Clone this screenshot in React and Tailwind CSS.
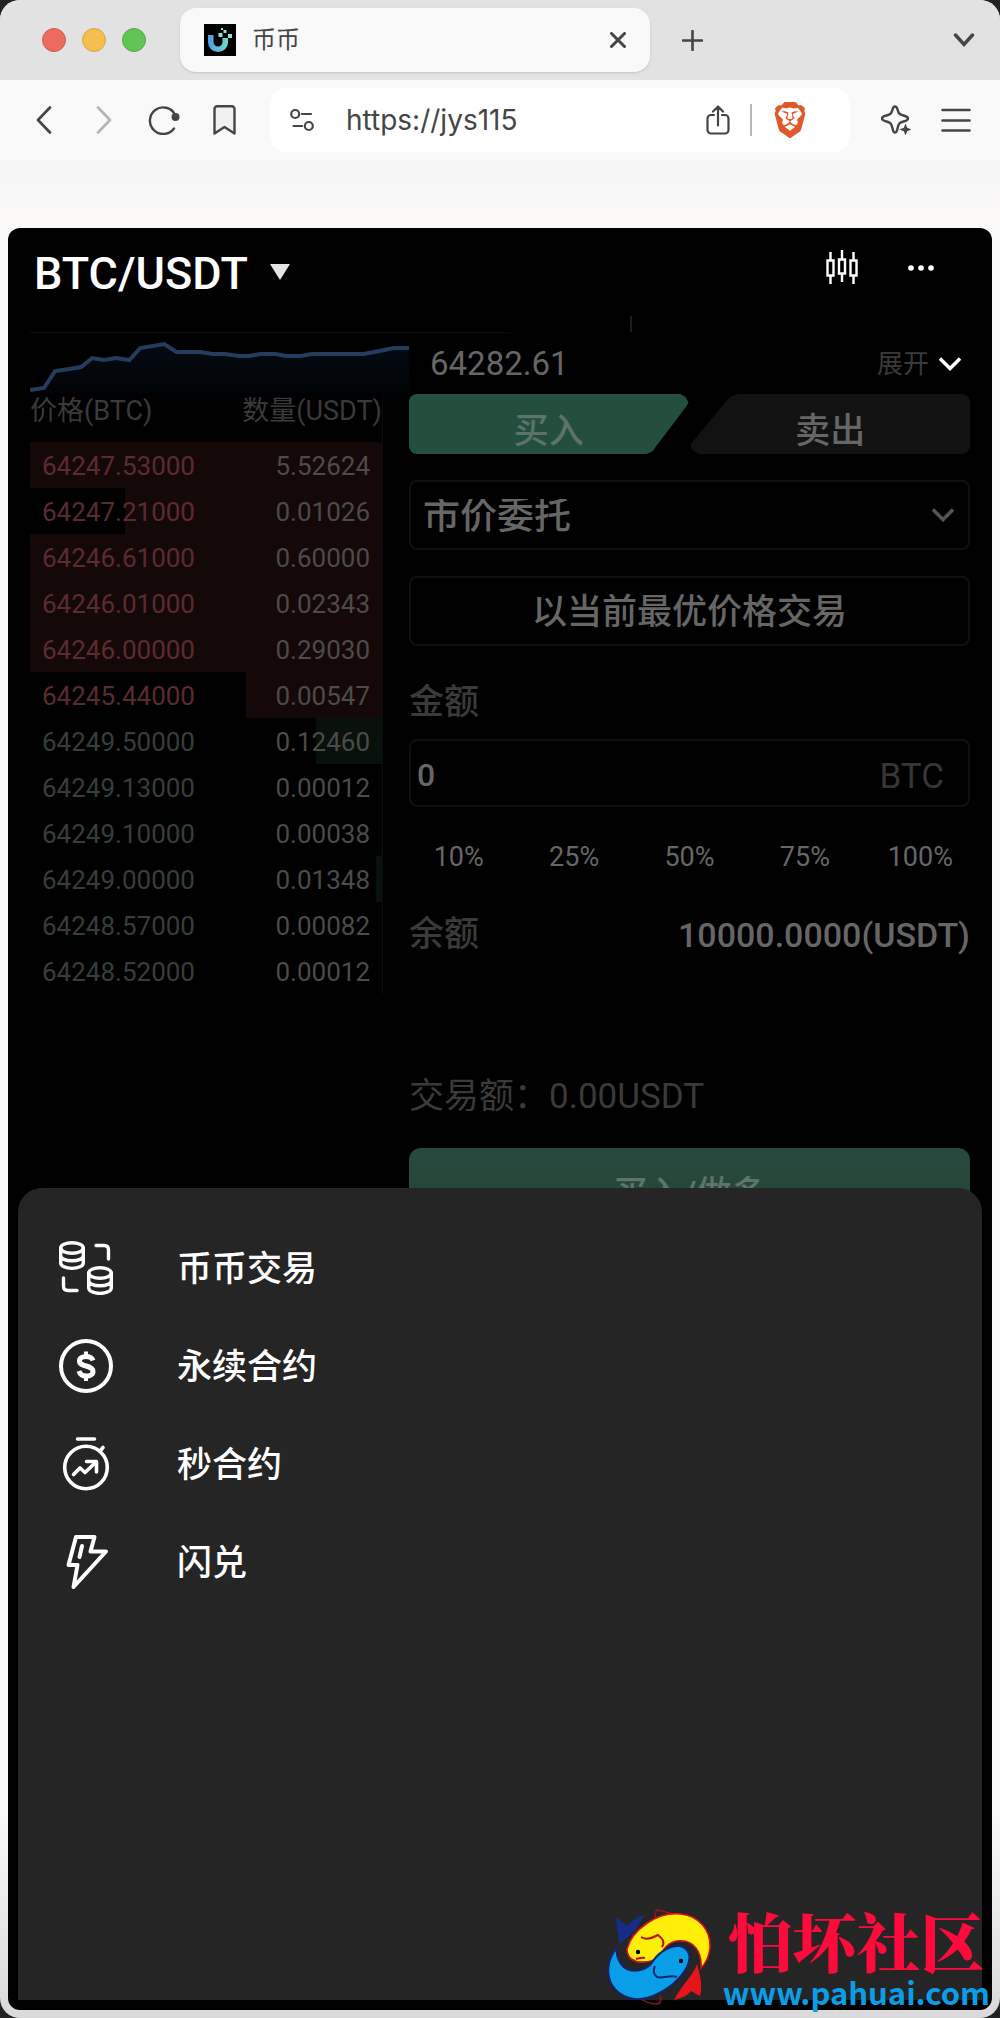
import React, { useState } from 'react'
import { SiBrave } from 'react-icons/si'

const asks = [
  { price: '64247.53000', amount: '5.52624', depth: 100 },
  { price: '64247.21000', amount: '0.01026', depth: 73 },
  { price: '64246.61000', amount: '0.60000', depth: 100 },
  { price: '64246.01000', amount: '0.02343', depth: 100 },
  { price: '64246.00000', amount: '0.29030', depth: 100 },
  { price: '64245.44000', amount: '0.00547', depth: 39 },
]

const bids = [
  { price: '64249.50000', amount: '0.12460', depth: 19 },
  { price: '64249.13000', amount: '0.00012', depth: 0 },
  { price: '64249.10000', amount: '0.00038', depth: 0 },
  { price: '64249.00000', amount: '0.01348', depth: 2 },
  { price: '64248.57000', amount: '0.00082', depth: 0 },
  { price: '64248.52000', amount: '0.00012', depth: 0 },
]

const percents = ['10%', '25%', '50%', '75%', '100%']

const menu = [
  { label: '币币交易', icon: CoinsIcon },
  { label: '永续合约', icon: DollarIcon },
  { label: '秒合约', icon: TimerIcon },
  { label: '闪兑', icon: FlashIcon },
]

function CoinsIcon() {
  return (
    <svg viewBox="0 0 54 54" className="size-[54px]" fill="none" stroke="currentColor" strokeWidth="3.400" strokeLinecap="round" aria-hidden="true">
      <ellipse cx="13" cy="7" rx="11.300" ry="5.300" />
      <path d="M1.700 7v15c0 3 5 5.400 11.300 5.400S24.300 25 24.300 22V7M1.700 14.500c0 3.200 5 5.300 11.300 5.300s11.300-2.100 11.300-5.300" />
      <ellipse cx="41" cy="32" rx="11.300" ry="5.300" />
      <path d="M29.700 32v15c0 3 5 5.400 11.300 5.400S52.300 50 52.300 47V32M29.700 39.500c0 3.200 5 5.300 11.300 5.300s11.300-2.100 11.300-5.300" />
      <path d="M37 4.500h8q4.500 0 4.500 4.500v9M4.500 37v8q0 4.500 4.500 4.500h9" />
    </svg>
  )
}

function DollarIcon() {
  return (
    <svg viewBox="0 0 54 54" className="size-[54px]" fill="none" stroke="currentColor" strokeWidth="4" aria-hidden="true">
      <circle cx="27" cy="27" r="25" />
      <path d="M34 21.500c-1-3-3.500-4-7-4s-6.500 1.500-6.500 4.500c0 6.500 13.500 3.500 13.500 10.500 0 3-3 4.500-6.500 4.500s-6.500-1.500-7.500-5" strokeWidth="5" />
      <path d="M27 12.500V18M27 36.500V42" />
    </svg>
  )
}

function TimerIcon() {
  return (
    <svg viewBox="0 0 54 54" className="size-[54px]" fill="none" stroke="currentColor" strokeWidth="3.600" strokeLinecap="round" strokeLinejoin="round" aria-hidden="true">
      <circle cx="27" cy="30.500" r="21.300" />
      <path d="M18.500 2h17M41 14l3-3.500M14.500 37.500l6.500-6.500 5 4.500 10.500-10M27.500 24.500h10V35" />
    </svg>
  )
}

function FlashIcon() {
  return (
    <svg viewBox="0 0 54 54" className="size-[54px]" fill="none" stroke="currentColor" strokeWidth="4" strokeLinecap="round" strokeLinejoin="round" aria-hidden="true">
      <path d="M17 2h18.500l-4 14.500h15.500L14.500 52l4-22H9.500z" />
      <path d="M23 11l-2.500 11" />
    </svg>
  )
}

function Chevron({ className }) {
  return (
    <svg viewBox="0 0 22 14" className={className} fill="none" stroke="currentColor" strokeWidth="3.400" aria-hidden="true">
      <path d="M1 1.500l10 10 10-10" />
    </svg>
  )
}

function BrowserBar() {
  return (
    <div className="font-['Inter','Noto_Sans_CJK_SC',sans-serif] text-[#454545]">
      <div className="flex h-20 items-center bg-[#e2e2e2] pl-[42px] pr-[25px]">
        <div className="flex gap-4">
          <span className="size-6 rounded-full border border-[#cf5a52] bg-[#ec6a5f]" />
          <span className="size-6 rounded-full border border-[#d5a545] bg-[#f4bf50]" />
          <span className="size-6 rounded-full border border-[#54a945] bg-[#61c554]" />
        </div>
        <div className="ml-[34px] flex h-16 w-[470px] items-center rounded-2xl bg-[#f9f9f9] px-6 shadow-sm shadow-black/10">
          <svg viewBox="0 0 32 32" className="size-8" aria-hidden="true">
            <defs>
              <linearGradient id="logo" x1="0" x2="1">
                <stop offset="0" stopColor="#4d9be8" />
                <stop offset="1" stopColor="#6fdcc8" />
              </linearGradient>
            </defs>
            <path d="M0 0h32v32H0z" />
            <path d="M4 11h5.500v7a4.500 4.500 0 0 0 9 0v-4H24v4.500a10 9.500 0 0 1-20 0z" fill="url(#logo)" />
            <path d="M14.500 9h4v4h-4zM19.500 6h3v3h-3zM24 10h4v4h-4zM17 4h2v2h-2z" fill="#8fe3d4" />
          </svg>
          <span className="ml-4 flex-1 text-2xl leading-8">币币</span>
          <button type="button" aria-label="关闭标签页">
            <svg viewBox="0 0 16 16" className="size-4" stroke="currentColor" strokeWidth="3" strokeLinecap="round" aria-hidden="true">
              <path d="M1.500 1.500l13 13M14.500 1.500l-13 13" />
            </svg>
          </button>
        </div>
        <button type="button" aria-label="新标签页" className="ml-8">
          <svg viewBox="0 0 21 21" className="size-[21px]" stroke="currentColor" strokeWidth="2.600" strokeLinecap="round" aria-hidden="true">
            <path d="M10.500 1v19M1 10.500h19" />
          </svg>
        </button>
        <button type="button" aria-label="标签页列表" className="ml-auto">
          <svg viewBox="0 0 22 14" className="h-[14px] w-[22px]" fill="none" stroke="currentColor" strokeWidth="3.400" strokeLinecap="round" aria-hidden="true">
            <path d="M2.500 2l8.500 9.500L19.500 2" />
          </svg>
        </button>
      </div>

      <div className="flex h-20 items-center pl-9 pr-[29px]">
        <button type="button" aria-label="后退">
          <svg viewBox="0 0 16 28" className="h-7 w-4" fill="none" stroke="currentColor" strokeWidth="2.600" strokeLinecap="round" strokeLinejoin="round" aria-hidden="true">
            <path d="M14 1.500L2 14l12 12.500" />
          </svg>
        </button>
        <button type="button" aria-label="前进" className="ml-11 text-[#b4b4b4]">
          <svg viewBox="0 0 16 28" className="h-7 w-4" fill="none" stroke="currentColor" strokeWidth="2.600" strokeLinecap="round" strokeLinejoin="round" aria-hidden="true">
            <path d="M2 1.500L14 14 2 26.500" />
          </svg>
        </button>
        <button type="button" aria-label="刷新" className="ml-9">
          <svg viewBox="0 0 32 30" className="h-[30px] w-8" fill="none" stroke="currentColor" strokeWidth="2.400" strokeLinecap="round" aria-hidden="true">
            <path d="M27 9.500A13.300 13.300 0 1 0 26 23.500" />
            <circle cx="27.500" cy="12" r="4" fill="currentColor" stroke="none" />
          </svg>
        </button>
        <button type="button" aria-label="收藏" className="ml-[33px]">
          <svg viewBox="0 0 23 30" className="h-[30px] w-[23px]" fill="#f0f0f0" stroke="currentColor" strokeWidth="2.400" strokeLinejoin="round" aria-hidden="true">
            <path d="M4 1.300h15a2.500 2.500 0 0 1 2.500 2.500V28.500L11.500 22 1.500 28.500V3.800A2.500 2.500 0 0 1 4 1.300z" />
          </svg>
        </button>
        <div className="ml-[34px] flex h-16 flex-1 items-center rounded-2xl bg-white pl-5 pr-[42px]">
          <svg viewBox="0 0 24 24" className="size-6" fill="none" stroke="currentColor" strokeWidth="2.200" strokeLinecap="round" aria-hidden="true">
            <circle cx="5.200" cy="6" r="4" />
            <circle cx="18.800" cy="18" r="4" />
            <path d="M12 6h9M3.500 18h8.500" />
          </svg>
          <input
            aria-label="网址"
            defaultValue="https://jys115"
            className="ml-8 w-0 flex-1 bg-transparent text-[28px] outline-none"
          />
          <button type="button" aria-label="分享">
            <svg viewBox="0 0 24 30" className="h-[30px] w-6" fill="none" stroke="currentColor" strokeWidth="2.200" strokeLinecap="round" strokeLinejoin="round" aria-hidden="true">
              <path d="M8 10H5a3.500 3.500 0 0 0-3.500 3.500V25A3.500 3.500 0 0 0 5 28.500h14a3.500 3.500 0 0 0 3.500-3.500V13.500A3.500 3.500 0 0 0 19 10h-3M12 20.500V1.500M7 6.500l5-5 5 5" />
            </svg>
          </button>
          <span className="ml-5 h-8 w-[2px] bg-[#b8b8b8]" />
          <SiBrave className="ml-5 size-9 text-[#e0592c]" />
        </div>
        <button type="button" aria-label="助手" className="ml-[31px]">
          <svg viewBox="0 0 30 30" className="size-[30px]" fill="none" stroke="currentColor" strokeWidth="2.400" strokeLinejoin="round" aria-hidden="true">
            <path d="M14 1.500c1.500 0 2 1 2.500 3 1 4 2 5 6 6 3 .700 4.500 1.200 4.500 3s-1.500 2.300-4.500 3c-4 1-5 2-6 7-.500 2.500-1 4-2.500 4s-2-1.500-2.500-4c-1-5-2-6-6-7-3-.700-4.500-1.200-4.500-3s1.500-2.300 4.500-3c4-1 5-2 6-6 .500-2 1-3 2.500-3z" />
            <path d="M24.500 18.500l1.700 4.300 4.300 1.700-4.300 1.700-1.700 4.300-1.700-4.300-4.300-1.700 4.300-1.700z" fill="currentColor" stroke="none" />
          </svg>
        </button>
        <button type="button" aria-label="菜单" className="ml-[30px]">
          <svg viewBox="0 0 30 24" className="h-6 w-[30px]" stroke="currentColor" strokeWidth="2.600" strokeLinecap="round" aria-hidden="true">
            <path d="M1.500 2h27M1.500 12.500h27M1.500 22.500h27" />
          </svg>
        </button>
      </div>
      <div className="h-[68px] bg-gradient-to-b from-[#f7f6f6] to-[#fbfaf9]" />
    </div>
  )
}

function OrderRow({ row, side }) {
  const ask = side === 'ask'
  const color = ask ? '#150809' : '#08110c'
  return (
    <tr
      className="h-[46px]"
      style={{ backgroundImage: `linear-gradient(to left, ${color} ${row.depth}%, transparent ${row.depth}%)` }}
    >
      <td className={ask ? 'pl-3 pt-[2px] text-[#5b2b2f]' : 'pl-3 pt-[2px] text-[#363e3c]'}>{row.price}</td>
      <td className="pr-3 pt-[2px] text-right text-[#4d4a4a]">{row.amount}</td>
    </tr>
  )
}

function PriceChart() {
  return (
    <svg viewBox="0 0 378 61" preserveAspectRatio="none" className="h-[61px] w-full" aria-hidden="true">
      <defs>
        <linearGradient id="area" x1="0" x2="0" y1="0" y2="1">
          <stop offset="0" stopColor="#040b14" />
          <stop offset="1" stopColor="#010304" />
        </linearGradient>
      </defs>
      <path d="M0 57l14-2 11-17 14-2 12-2 11-9 12 2 12-2 13 2 11-12 24-4 12 8h24l12 2h13l13 2h10l12-2h15l10 2h15l11-2h52l15-3 15-3h15v45H0z" fill="url(#area)" />
      <path d="M0 57l14-2 11-17 14-2 12-2 11-9 12 2 12-2 13 2 11-12 24-4 12 8h24l12 2h13l13 2h10l12-2h15l10 2h15l11-2h52l15-3 15-3h15" fill="none" stroke="#243d5c" strokeWidth="4" />
    </svg>
  )
}

function OrderForm() {
  const [type, setType] = useState('market')
  const [amount, setAmount] = useState('0')

  return (
    <form className="flex flex-col text-[35px] leading-9" onSubmit={(e) => e.preventDefault()}>
      <div className="grid h-[60px] grid-cols-2 gap-[2px] font-medium">
        <button type="button" className="rounded-lg bg-[#244f3f] pt-4 text-[#5d7269] [clip-path:polygon(0_0,97%_0,99%_5%,100%_14%,99%_22%,87%_96%,85%_100%,0_100%)]">
          买入
        </button>
        <button type="button" className="rounded-lg bg-[#121212] pt-4 text-[#666] [clip-path:polygon(17%_0,100%_0,100%_100%,3%_100%,0_92%,0_84%,14%_5%)]">
          卖出
        </button>
      </div>

      <div className="relative mt-[26px]">
        <select
          aria-label="委托类型"
          value={type}
          onChange={(e) => setType(e.target.value)}
          className="h-[70px] w-full appearance-none rounded-lg border-2 border-[#101010] bg-black pl-3 pt-1 text-[37px] font-medium text-[#666] outline-none"
        >
          <option value="market">市价委托</option>
          <option value="limit">限价委托</option>
        </select>
        <Chevron className="pointer-events-none absolute right-4 top-7 h-[14px] w-[22px] text-[#555]" />
      </div>

      <div className="mt-[26px] flex h-[70px] items-center justify-center rounded-lg border-2 border-[#101010] pt-1 font-medium text-[#666]">
        以当前最优价格交易
      </div>

      <label htmlFor="amount" className="mt-[39px] font-medium text-[#3a3a3a]">金额</label>
      <div className="mt-[18px] flex h-[68px] items-center rounded-lg border-2 border-[#101010] pl-[6px] pr-6">
        <input
          id="amount"
          value={amount}
          onChange={(e) => setAmount(e.target.value)}
          className="w-0 flex-1 bg-transparent pt-1 text-[32px] font-medium text-[#666] outline-none"
        />
        <span className="pt-2 text-[35px] text-[#363636]">BTC</span>
      </div>

      <div className="-mx-2 mt-8 grid grid-cols-5 text-[27px] text-[#666]">
        {percents.map((p) => (
          <button key={p} type="button">{p}</button>
        ))}
      </div>

      <div className="mt-[42px] flex justify-between font-medium">
        <span className="text-[#3a3a3a]">余额</span>
        <span className="text-[34px] text-[#666]">10000.0000(USDT)</span>
      </div>

      <div className="mt-[126px] text-[#3a3a3a]">
        交易额：0.00USDT
      </div>
      <button type="submit" className="mt-[33px] h-[90px] rounded-xl bg-gradient-to-b from-[#28493f] to-[#24462f] pt-1 font-medium text-[#5f756a]">
        买入/做多
      </button>
    </form>
  )
}

function Watermark() {
  return (
    <div className="absolute bottom-1 right-[10px] flex items-end gap-3">
      <svg viewBox="0 0 104 98" className="mb-2 h-[98px] w-[104px]" aria-hidden="true">
        <path d="M12 36C12 26 8 19 10 9c4 5 8 6 10 9 5-6 11-10 18-11-5 6-6 12-12 18-5 4-8 7-14 11z" fill="#172c85" />
        <path d="M50 14c-3-6-2-10 0-12 7 1 13 4 20 5M53 88c2 5 0 8-3 8-6 0-12-2-18-6" fill="none" stroke="#9c1420" strokeWidth="1.500" />
        <path d="M20 41C25 22 50 3 74 6c18 2 30 16 29 34-1 9-4 15-9 20C95 45 88 31 70 33 64 34 60 37 57 41 54 47 48 54 37 54c-10 1-17-4-17-13z" fill="#ffee0a" stroke="#d5101b" strokeWidth="1.600" />
        <path d="M10 40C0 51-1 66 5 77c8 13 25 18 41 11 14-6 27-16 34-29 5-10 2-19-7-21-12-1-23 8-29 18-9 9-24 9-30 0-4-6-5-10-4-16z" fill="#0b9ee8" stroke="#14246e" strokeWidth="2" />
        <path d="M34 29c7 4 12 0 17-2 5 4 7 7 4 12M29 51c4-1 6-2 9-1" fill="none" stroke="#b20f17" strokeWidth="2" />
        <path d="M70 69c-7-3-13 2-20 0-4-3-4-7-2-11" fill="none" stroke="#14246e" strokeWidth="2" />
        <circle cx="31" cy="44" r="2.200" />
        <circle cx="74" cy="53" r="2.200" />
        <path d="M90 56c-4 12-16 22-23 36 7-2 12-3 17-9l9 5c3-10 0-21-3-32z" fill="#e8141c" />
      </svg>
      <div className="flex flex-col items-center">
        <span className="font-['Noto_Serif_CJK_SC','Noto_Sans_CJK_SC',serif] text-[64px] font-black leading-[62px] text-[#ff0a3c]">怕坏社区</span>
        <span className="font-['Noto_Sans_CJK_SC',sans-serif] text-[31px] font-bold leading-[44px] text-[#0b9ee8]">www.pahuai.com</span>
      </div>
    </div>
  )
}

export default function App() {
  return (
    <div className="bg-[#222]">
      <div className="relative flex min-h-screen flex-col overflow-hidden rounded-[20px] bg-gradient-to-b from-[#f9f9f9] from-90% to-[#d9d9d9] pb-2">
        <BrowserBar />

        <main className="relative mx-2 flex-1 overflow-hidden rounded-xl bg-black px-[22px] font-['Roboto','Noto_Sans_CJK_SC',sans-serif]">
          <header className="flex h-[104px] items-start pl-1 pr-9 pt-5 text-white">
            <h1 className="text-[45px] font-medium leading-[52px]">BTC/USDT</h1>
            <button type="button" aria-label="切换交易对" className="ml-[22px] mt-4">
              <svg viewBox="0 0 20 16" className="h-4 w-5" fill="#e4e4e4" aria-hidden="true">
                <path d="M0 0h20L10 16z" />
              </svg>
            </button>
            <button type="button" aria-label="K线" className="ml-auto mt-[2px]">
              <svg viewBox="0 0 32 34" className="h-[34px] w-8" fill="none" stroke="currentColor" strokeWidth="2.400" aria-hidden="true">
                <path d="M1.500 10.500h6v15h-6zM13 9.500h6v14h-6zM24.500 10.500h6v15h-6zM4.500 2v8.500M4.500 25.500V34M16 0v9.500M16 23.500V32M27.500 2v8.500M27.500 25.500V34" />
              </svg>
            </button>
            <button type="button" aria-label="更多" className="ml-[50px] mt-[17px]">
              <svg viewBox="0 0 26 6" className="h-[6px] w-[26px]" fill="currentColor" aria-hidden="true">
                <circle cx="3" cy="3" r="2.800" />
                <circle cx="13" cy="3" r="2.800" />
                <circle cx="23" cy="3" r="2.800" />
              </svg>
            </button>
          </header>

          <div className="flex h-px justify-end bg-gradient-to-r from-[#0e0e0e] from-50% to-transparent to-52%">
            <span className="mr-[36%] h-4 w-[2px] -translate-y-4 bg-[#1d1d1d]" />
          </div>

          <div className="grid grid-cols-[379fr_561fr]">
            <PriceChart />
            <div className="flex items-center justify-between pl-[21px] pr-[9px]">
              <span className="text-[33px] leading-9 text-[#666]">64282.61</span>
              <button type="button" className="flex items-center gap-[10px] text-[26px] leading-9 text-[#3a3a3a]">
                展开
                <Chevron className="h-[14px] w-[22px] text-white" />
              </button>
            </div>

            <div className="pr-[26px]">
              <table className="w-full border-r border-[#0c0c0c] text-[26px] leading-[34px]">
                <thead>
                  <tr className="h-12 align-top text-[27px] text-[#3a3a3a]">
                    <th className="text-left font-normal">价格(BTC)</th>
                    <th className="text-right font-normal">数量(USDT)</th>
                  </tr>
                </thead>
                <tbody>
                  {asks.map((row) => (
                    <OrderRow key={row.price} row={row} side="ask" />
                  ))}
                  {bids.map((row) => (
                    <OrderRow key={row.price} row={row} side="bid" />
                  ))}
                </tbody>
              </table>
            </div>
            <OrderForm />
          </div>

          <nav className="absolute inset-x-[10px] bottom-[10px] top-[960px] rounded-t-[24px] bg-[#252525] pt-[31px] text-white">
            {menu.map(({ label, icon: Icon }) => (
              <button key={label} type="button" className="flex h-[98px] w-full items-center gap-16 pl-[41px] text-[35px] font-medium leading-9">
                <Icon />
                <span className="pt-1">{label}</span>
              </button>
            ))}
          </nav>
        </main>

        <Watermark />
      </div>
    </div>
  )
}
